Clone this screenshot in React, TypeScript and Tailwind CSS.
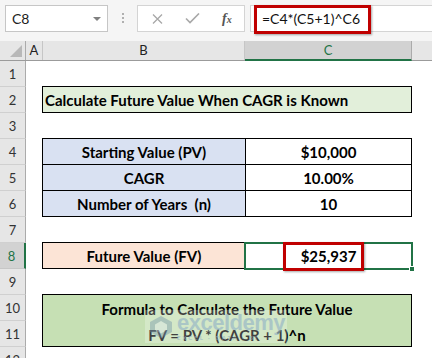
import React from 'react';

const green = '#217346';

function RowHead({ n, selected }: { n: number; selected?: boolean }) {
  return (
    <div
      className={
        selected
          ? 'flex h-[26px] w-[26px] shrink-0 items-center justify-center border-b border-r-2 border-b-[#c6c6c6] border-r-[#217346] bg-[#d2d2d2] pt-[3px] pr-[1px] text-[13px] text-[#217346]'
          : 'flex h-[26px] w-[26px] shrink-0 items-center justify-center border-b border-r border-b-[#d0d0d0] border-r-[#ababab] bg-[#e6e6e6] pt-[3px] text-[13px] text-[#333]'
      }
    >
      {n}
    </div>
  );
}

function Row({ n, selected, children }: { n: number; selected?: boolean; children?: React.ReactNode }) {
  return (
    <div className="flex h-[26px] items-start">
      <RowHead n={n} selected={selected} />
      <div className="w-[16px] shrink-0" />
      {children}
    </div>
  );
}

function Pair({ label, value, bg }: { label: string; value: string; bg: string }) {
  return (
    <>
      <div className={`-mt-px flex h-[27px] w-[204px] shrink-0 items-center justify-center whitespace-pre border border-black pt-[2px] text-[15px] font-bold ${bg}`}>
        {label}
      </div>
      <div className="-ml-px -mt-px flex h-[27px] w-[167px] shrink-0 items-center justify-center border border-black bg-white pt-[2px] text-[15px] font-bold">
        {value}
      </div>
    </>
  );
}

export default function App() {
  return (
    <div className="h-[358px] w-[432px] overflow-hidden bg-white font-['Lato','Liberation_Sans',sans-serif] text-black">
      {/* name box + formula bar */}
      <div className="relative flex h-[41px] items-start bg-[#f5f5f5] pt-[5px]">
        <div className="ml-[5px] flex h-[27px] w-[103px] shrink-0 items-center justify-between border border-[#c6c6c6] bg-white pl-[6px] pr-[6px]">
          <span className="text-[14px] text-[#222]">C8</span>
          <svg width="8" height="4" viewBox="0 0 8 4">
            <path d="M0 0h8L4 4z" fill="#808080" />
          </svg>
        </div>
        <div className="ml-[14px] mt-[8px] flex shrink-0 flex-col gap-[2px]">
          <span className="h-[2px] w-[2px] bg-[#b0b0b0]" />
          <span className="h-[2px] w-[2px] bg-[#b0b0b0]" />
          <span className="h-[2px] w-[2px] bg-[#b0b0b0]" />
        </div>
        <div className="ml-[13px] flex h-[27px] w-[108px] shrink-0 items-center border border-[#d4d4d4] bg-white">
          <svg className="ml-[14px]" width="11" height="10" viewBox="0 0 11 10">
            <path d="M1 0.5L10 9.5M10 0.5L1 9.5" stroke="#a8a8a8" strokeWidth="1.3" />
          </svg>
          <svg className="ml-[22px]" width="15" height="11" viewBox="0 0 15 11">
            <path d="M1 5.5L5 9.5L14 0.5" stroke="#a8a8a8" strokeWidth="1.6" fill="none" />
          </svg>
          <span className="ml-[22px] font-['Liberation_Serif',serif] text-[14px] font-bold italic text-[#555]">
            f<span className="text-[10px]">x</span>
          </span>
        </div>
        <div className="ml-[5px] flex h-[27px] w-[200px] shrink-0 items-center border border-[#d4d4d4] bg-white pl-[11px]">
          <span className="text-[14px] text-[#111]">=C4*(C5+1)^C6</span>
        </div>
        <div className="absolute left-[254px] top-[5px] h-[29px] w-[117px] border-[3px] border-[#c00000] shadow-[1px_1px_2px_rgba(0,0,0,0.35)]" />
      </div>

      {/* column headers */}
      <div className="flex h-[20px] items-start border-b border-[#9b9b9b] bg-[#e6e6e6] text-[13px] text-[#222]">
        <div className="flex h-[19px] w-[26px] shrink-0 items-end justify-end border-r border-[#ababab] pb-[3px] pr-[3px]">
          <svg width="12" height="12" viewBox="0 0 12 12">
            <path d="M12 0V12H0z" fill="#b8b8b8" />
          </svg>
        </div>
        <div className="flex h-[19px] w-[17px] shrink-0 items-center justify-center border-r border-[#c6c6c6] pt-[1px]">A</div>
        <div className="flex h-[19px] w-[202px] shrink-0 items-center justify-center border-r border-[#c6c6c6] pt-[1px]">B</div>
        <div className="flex h-[20px] w-[167px] shrink-0 items-center justify-center border-b-2 border-r border-b-[#217346] border-r-[#ababab] bg-[#d2d2d2] pt-[1px] text-[#217346]">
          C
        </div>
        <div className="h-[19px] flex-1" />
      </div>

      {/* sheet */}
      <Row n={1} />
      <Row n={2}>
        <div className="-mt-px flex h-[27px] w-[370px] shrink-0 items-center border border-black bg-[#e2efda] pl-[2px] pt-[2px] text-[15px] font-bold">
          Calculate Future Value When CAGR is Known
        </div>
      </Row>
      <Row n={3} />
      <Row n={4}>
        <Pair label="Starting Value (PV)" value="$10,000" bg="bg-[#d9e1f2]" />
      </Row>
      <Row n={5}>
        <Pair label="CAGR" value="10.00%" bg="bg-[#d9e1f2]" />
      </Row>
      <Row n={6}>
        <Pair label="Number of Years  (n)" value="10" bg="bg-[#d9e1f2]" />
      </Row>
      <Row n={7} />
      <Row n={8} selected>
        <div className="-mt-px flex h-[27px] w-[204px] shrink-0 items-center justify-center border border-black bg-[#fce4d6] pt-[2px] text-[15px] font-bold">
          Future Value (FV)
        </div>
        <div className="relative -ml-px -mt-px flex h-[27px] w-[167px] shrink-0 items-center justify-center border border-black bg-white pt-[2px] text-[15px] font-bold">
          $25,937
          <div className="absolute -left-[2px] -top-px h-[28px] w-[169px] border-2" style={{ borderColor: green }} />
          <div className="absolute left-[163px] top-[23px] h-[6px] w-[6px] border border-white" style={{ background: green }} />
          <div className="absolute left-[37px] -top-px h-[29px] w-[81px] border-[3px] border-[#c00000] shadow-[1px_1px_2px_rgba(0,0,0,0.35)]" />
        </div>
      </Row>
      <Row n={9} />
      <Row n={10}>
        <div className="relative -mt-px flex h-[53px] w-[370px] shrink-0 flex-col border border-black bg-[#c6e0b4] text-[15px] font-bold">
          <div className="flex h-[26px] items-center justify-center pt-[3px]">Formula to Calculate the Future Value</div>
          <div className="flex h-[26px] items-center justify-center pt-[3px]">FV = PV * (CAGR + 1)^n</div>
          {/* watermark */}
          <div className="absolute left-[102px] top-[15px] flex h-[33px] w-[142px] items-center bg-white/25 pl-[3px]">
            <svg width="26" height="24" viewBox="0 0 26 24" className="opacity-40">
              <path d="M13 1L24 7V17L13 23L2 17V7z" fill="#6d8fa8" />
              <path d="M13 6L19 9.5V15L13 18.5L7 15V9.5z" fill="#dce6ee" />
            </svg>
            <div className="ml-[3px] flex flex-col leading-none">
              <span className="font-['Liberation_Sans',sans-serif] text-[22px] font-bold tracking-[-0.5px] text-[#8fb0c6] opacity-60">exceldemy</span>
              <span className="mt-[1px] text-[6px] tracking-[2px] text-[#8fb0c6] opacity-60">EXCEL · DATA · BI</span>
            </div>
          </div>
        </div>
      </Row>
      <Row n={11} />
      <Row n={12} />
    </div>
  );
}
